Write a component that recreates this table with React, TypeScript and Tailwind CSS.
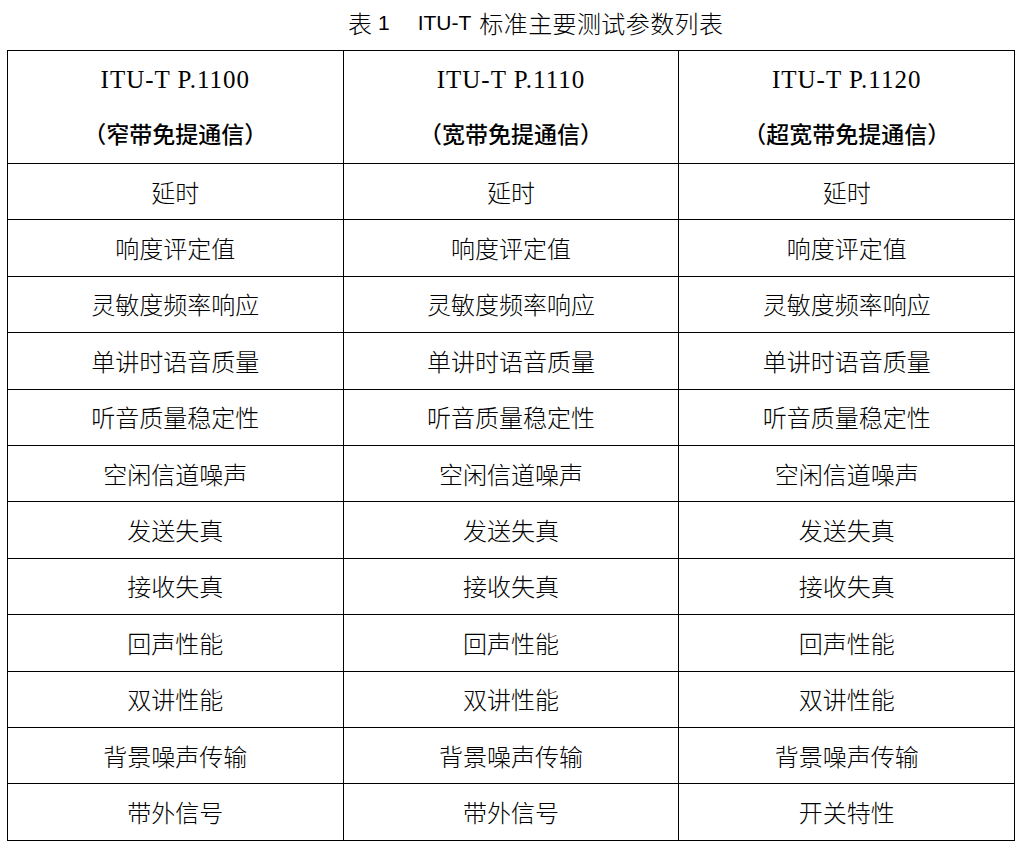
const rows: [string, string, string][] = [
  ["延时", "延时", "延时"],
  ["响度评定值", "响度评定值", "响度评定值"],
  ["灵敏度频率响应", "灵敏度频率响应", "灵敏度频率响应"],
  ["单讲时语音质量", "单讲时语音质量", "单讲时语音质量"],
  ["听音质量稳定性", "听音质量稳定性", "听音质量稳定性"],
  ["空闲信道噪声", "空闲信道噪声", "空闲信道噪声"],
  ["发送失真", "发送失真", "发送失真"],
  ["接收失真", "接收失真", "接收失真"],
  ["回声性能", "回声性能", "回声性能"],
  ["双讲性能", "双讲性能", "双讲性能"],
  ["背景噪声传输", "背景噪声传输", "背景噪声传输"],
  ["带外信号", "带外信号", "开关特性"],
];

const headers = [
  { code: "ITU-T P.1100", name: "（窄带免提通信）" },
  { code: "ITU-T P.1110", name: "（宽带免提通信）" },
  { code: "ITU-T P.1120", name: "（超宽带免提通信）" },
];

const cjk = "font-['Noto_Sans_CJK_SC',sans-serif]";

export default function App() {
  return (
    <div className="w-[1020px] h-[848px] bg-white text-black">
      {/* Caption */}
      <div className="h-[50px] flex items-center pl-[348px] pb-[5px]">
        <span className={`${cjk} font-light text-[24px] leading-none`}>表</span>
        <span className="ml-[6px] font-['Liberation_Sans',sans-serif] text-[21px] leading-none">
          1
        </span>
        <span className="ml-[28px] font-['Liberation_Sans',sans-serif] text-[21px] leading-none">
          ITU-T
        </span>
        <span className={`ml-[8px] ${cjk} font-light text-[24px] leading-none tracking-[0.4px]`}>
          标准主要测试参数列表
        </span>
      </div>

      {/* Table */}
      <table className="ml-[7px] w-[1008px] border-collapse table-fixed">
        <thead>
          <tr className="h-[113px]">
            {headers.map((h) => (
              <th
                key={h.code}
                className="border border-black p-0 align-middle text-center font-normal"
              >
                <div className="flex flex-col items-center gap-[25px] pb-[2px]">
                  <span className="font-['Liberation_Serif',serif] text-[25px] leading-[29px] tracking-[1px]">
                    {h.code}
                  </span>
                  <span className={`${cjk} font-medium text-[23px] leading-[29px]`}>
                    {h.name}
                  </span>
                </div>
              </th>
            ))}
          </tr>
        </thead>
        <tbody>
          {rows.map((r, i) => (
            <tr key={i} className="h-[56.4px]">
              {r.map((c, j) => (
                <td
                  key={j}
                  className={`border border-black p-0 text-center align-middle ${cjk} font-light text-[24px] leading-none`}
                >
                  {c}
                </td>
              ))}
            </tr>
          ))}
        </tbody>
      </table>
    </div>
  );
}
